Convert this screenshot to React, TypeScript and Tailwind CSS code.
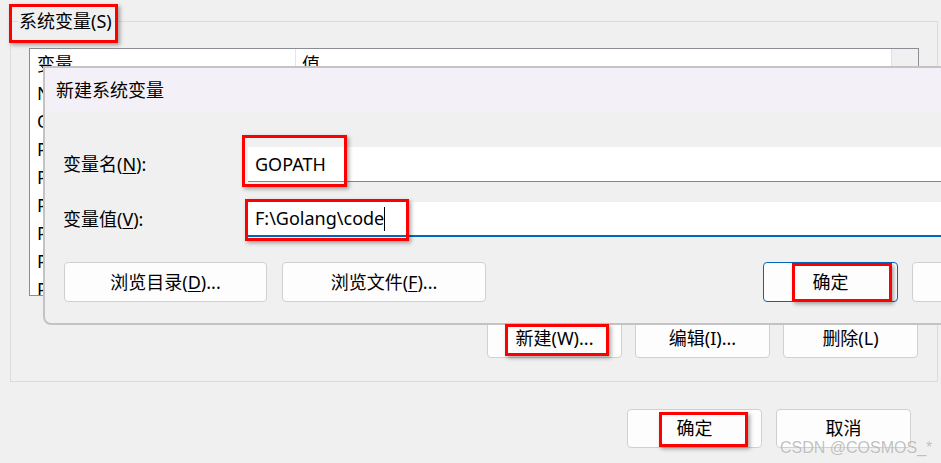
const font = "font-['Noto_Sans','Noto_Sans_CJK_SC',sans-serif]";

function Btn({
  children,
  className = "",
}: {
  children?: React.ReactNode;
  className?: string;
}) {
  return (
    <div
      className={`flex shrink-0 items-center justify-center rounded-[4px] border bg-[#fdfdfd] text-[18px] text-black ${className}`}
    >
      {children}
    </div>
  );
}

function Mark({ className }: { className: string }) {
  return (
    <div
      className={`absolute border-[3px] border-[#ff0000] shadow-[2px_2px_4px_rgba(0,0,0,0.35)] ${className}`}
    />
  );
}

const rows = [
  "NUMBER_OF_PROCESSORS",
  "OS",
  "Path",
  "PATHEXT",
  "PROCESSOR_ARCHITECTURE",
  "PROCESSOR_IDENTIFIER",
  "PROCESSOR_LEVEL",
  "PROCESSOR_REVISION",
];

export default function App() {
  return (
    <div
      className={`relative w-[941px] h-[463px] overflow-hidden bg-[#f0f0f0] text-black ${font}`}
    >
      <div className="pt-[21px] pl-[10px]">
        <div className="relative w-[928px] h-[361px] border border-[#dcdcdc]">
          <span className="absolute left-[7px] -top-[13px] bg-[#f0f0f0] px-px text-[18px] leading-[24px]">
            系统变量(S)
          </span>
          <div className="ml-[18px] mt-[26px] w-[890px] h-[248px] border border-[#8a8e94] bg-white overflow-hidden">
            <div className="flex h-[30px] text-[18px] leading-[30px]">
              <div className="w-[266px] pl-[7px] border-r border-[#e5e5e5]">变量</div>
              <div className="flex-1 pl-[6px]">值</div>
              <div className="w-[27px] bg-[#f0f0f0] border-l border-[#e0e0e0]" />
            </div>
            {rows.map((r) => (
              <div key={r} className="flex h-[28px] text-[18px] leading-[28px]">
                <div className="w-[266px] pl-[7px]">{r}</div>
                <div className="flex-1" />
                <div className="w-[27px] bg-[#f0f0f0]" />
              </div>
            ))}
          </div>
          <div className="flex justify-end gap-[13px] mr-[19px] mt-[23px]">
            <Btn className="w-[135px] h-[39px] border-[#d0d0d0]">新建(W)...</Btn>
            <Btn className="w-[135px] h-[39px] border-[#d0d0d0]">编辑(I)...</Btn>
            <Btn className="w-[135px] h-[39px] border-[#d0d0d0]">删除(L)</Btn>
          </div>
        </div>
      </div>

      <div className="flex justify-end gap-[14px] pr-[30px] mt-[27px]">
        <Btn className="w-[135px] h-[39px] border-[#d0d0d0]">确定</Btn>
        <Btn className="w-[135px] h-[39px] border-[#d0d0d0]">取消</Btn>
      </div>

      {/* 新建系统变量 dialog */}
      <div className="absolute left-[43px] top-[66px] w-[1000px] h-[259px] border-2 border-[#c3c3c3] rounded-bl-[8px] bg-[#f0f0f0] overflow-hidden">
        <div className="h-[44px] bg-[#f4f0f7] pl-[11px] text-[18px] leading-[44px]">
          新建系统变量
        </div>
        <div className="pl-[18px] pt-[35px]">
          <div className="flex items-center h-[35px]">
            <div className="w-[185px] shrink-0 text-[18px]">
              变量名(<span className="underline underline-offset-2">N</span>):
            </div>
            <div className="flex-1 h-[35px] bg-white border-b border-[#868686] pl-[7px] text-[18px] leading-[35px]">
              GOPATH
            </div>
          </div>
          <div className="flex items-center h-[35px] mt-[20px]">
            <div className="w-[185px] shrink-0 text-[18px]">
              变量值(<span className="underline underline-offset-2">V</span>):
            </div>
            <div className="flex-1 h-[35px] bg-white border-b-2 border-[#0067c0] pl-[7px] text-[18px] leading-[33px] flex items-center">
              <span>F:\Golang\code</span>
              <span className="w-px h-[24px] bg-black" />
            </div>
          </div>
          <div className="flex mt-[25px]">
            <Btn className="w-[203px] h-[40px] ml-px border-[#d0d0d0]">
              浏览目录(<span className="underline underline-offset-2">D</span>)...
            </Btn>
            <Btn className="w-[204px] h-[40px] ml-[15px] border-[#d0d0d0]">
              浏览文件(<span className="underline underline-offset-2">F</span>)...
            </Btn>
            <Btn className="w-[135px] h-[40px] ml-[277px] border-[#0067c0]">确定</Btn>
            <Btn className="w-[135px] h-[40px] ml-[14px] border-[#d0d0d0]">取消</Btn>
          </div>
        </div>
      </div>

      <Mark className="left-[9px] top-[4px] w-[109px] h-[39px]" />
      <Mark className="left-[242px] top-[135px] w-[105px] h-[52px]" />
      <Mark className="left-[245px] top-[199px] w-[164px] h-[42px]" />
      <Mark className="left-[792px] top-[263px] w-[100px] h-[39px]" />
      <Mark className="left-[505px] top-[324px] w-[104px] h-[32px]" />
      <Mark className="left-[659px] top-[412px] w-[89px] h-[35px]" />

      <div className="absolute left-[780px] top-[436px] text-[16px] font-['Liberation_Sans',sans-serif] text-[rgba(140,140,140,0.55)] [text-shadow:0_0_1px_rgba(255,255,255,0.8)]">
        CSDN @COSMOS_*
      </div>
    </div>
  );
}
